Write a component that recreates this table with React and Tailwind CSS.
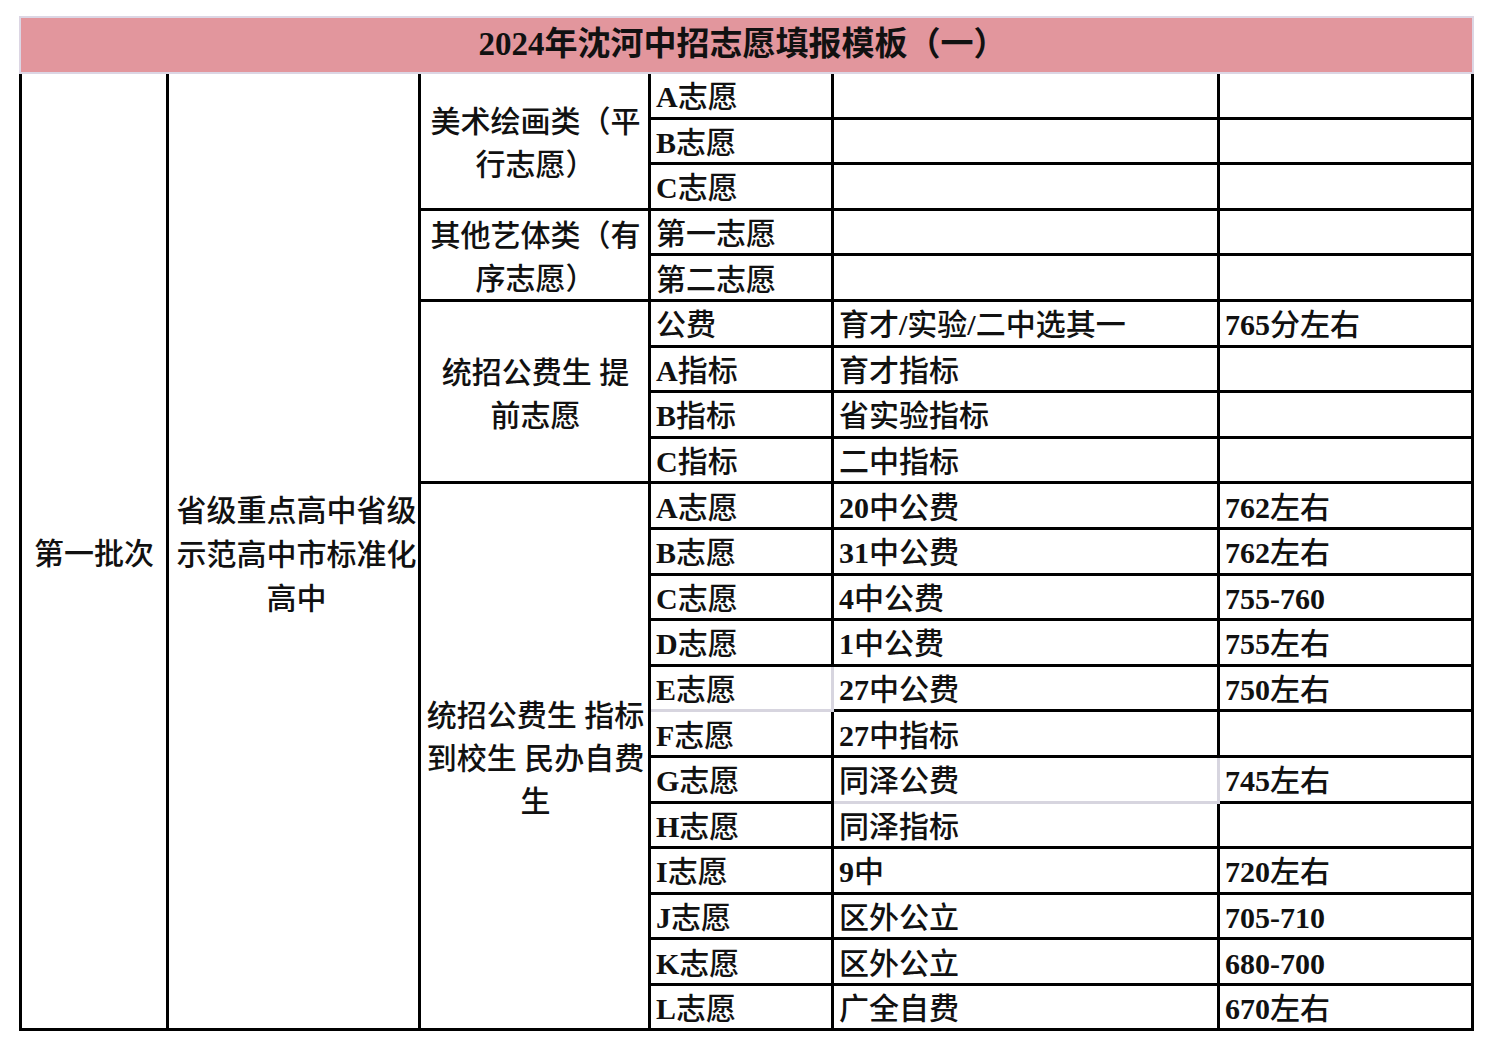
import React from 'react';

const rows = [
  ['A志愿', '', ''],
  ['B志愿', '', ''],
  ['C志愿', '', ''],
  ['第一志愿', '', ''],
  ['第二志愿', '', ''],
  ['公费', '育才/实验/二中选其一', '765分左右'],
  ['A指标', '育才指标', ''],
  ['B指标', '省实验指标', ''],
  ['C指标', '二中指标', ''],
  ['A志愿', '20中公费', '762左右'],
  ['B志愿', '31中公费', '762左右'],
  ['C志愿', '4中公费', '755-760'],
  ['D志愿', '1中公费', '755左右'],
  ['E志愿', '27中公费', '750左右'],
  ['F志愿', '27中指标', ''],
  ['G志愿', '同泽公费', '745左右'],
  ['H志愿', '同泽指标', ''],
  ['I志愿', '9中', '720左右'],
  ['J志愿', '区外公立', '705-710'],
  ['K志愿', '区外公立', '680-700'],
  ['L志愿', '广全自费', '670左右'],
];

// groups in the third column, keyed by the row they start on
const groups = {
  0: { span: 'row-span-3', lines: ['美术绘画类（平', '行志愿）'] },
  3: { span: 'row-span-2', lines: ['其他艺体类（有', '序志愿）'] },
  5: { span: 'row-span-4', lines: ['统招公费生 提', '前志愿'] },
  9: { span: 'row-span-12', lines: ['统招公费生 指标', '到校生 民办自费', '生'] },
};

// latin letters and digits are set in bold serif, the rest in the CJK face
function Txt({ text }) {
  const parts = text.split(/([A-Za-z0-9\-/]+)/).filter(Boolean);
  return (
    <span className="whitespace-nowrap">
      {parts.map((p, i) =>
        /^[A-Za-z0-9\-/]+$/.test(p) ? (
          <span key={i} className="font-bold">{p}</span>
        ) : (
          <span key={i}>{p}</span>
        )
      )}
    </span>
  );
}

const cell = 'bg-white flex items-center pl-[5px] pt-[4px]';
const grayFix = 'mr-[-3px] mb-[-3px] border-r-[3px] border-b-[3px] border-[#d7d5df]';

export default function App() {
  return (
    <div className="min-h-screen bg-white pt-[16px] pl-[19px] font-['Liberation_Serif','Noto_Sans_CJK_SC',serif] font-medium text-[30px] text-[#111]">
      <div className="w-[1455px]">
        <div className="h-[58px] bg-[#e2969d] border-2 border-[#dcd6e4] flex items-center justify-center pr-[8px]">
          <span className="text-[33px] font-bold">2024年沈河中招志愿填报模板（一）</span>
        </div>

        <div className="grid grid-cols-[144px_249px_227px_180px_383px_251px] grid-rows-[repeat(21,42.6px)] gap-[3px] bg-black px-[3px] pb-[3px] leading-none">
          <div className="row-span-[21] bg-white flex items-center justify-center pt-[6px]">第一批次</div>
          <div className="row-span-[21] bg-white flex items-center justify-center text-center leading-[44px] pl-[6px] pt-[8px]">
            <div>
              省级重点高中省级<br />示范高中市标准化<br />高中
            </div>
          </div>

          {rows.map((r, i) => {
            const g = groups[i];
            const isE = i === 13;
            const isG = i === 15;
            return (
              <React.Fragment key={i}>
                {g && (
                  <div className={`${g.span} bg-white flex items-center justify-center text-center leading-[43px] pl-[2px] pt-[4px]`}>
                    <div>
                      {g.lines.map((l, k) => (
                        <div key={k} className="whitespace-nowrap">{l}</div>
                      ))}
                    </div>
                  </div>
                )}
                <div className={`${cell} ${isE ? grayFix : ''}`}>
                  <Txt text={r[0]} />
                </div>
                <div className={`${cell} ${isG ? grayFix : ''}`}>
                  <Txt text={r[1]} />
                </div>
                <div className={cell}>
                  <Txt text={r[2]} />
                </div>
              </React.Fragment>
            );
          })}
        </div>
      </div>
    </div>
  );
}
